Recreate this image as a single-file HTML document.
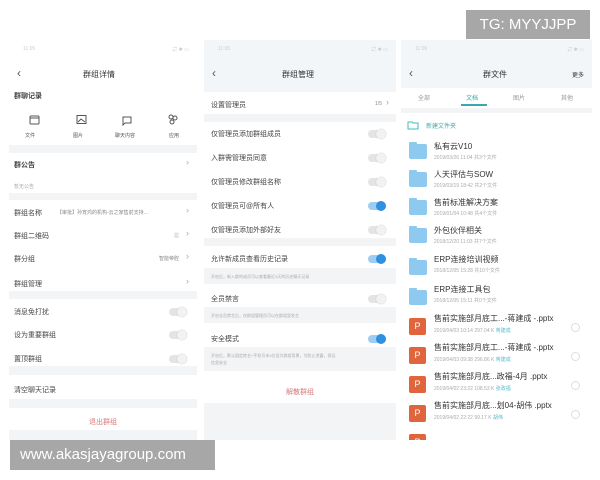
<!DOCTYPE html>
<html><head><meta charset="utf-8"><style>
*{margin:0;padding:0;box-sizing:border-box}
body{width:600px;height:480px;background:#fff;position:relative;overflow:hidden;font-family:"Liberation Sans","Noto Sans CJK SC",sans-serif;color:#333}
.a{position:absolute;white-space:nowrap}
.p{position:absolute;top:40px;height:400px;overflow:hidden}
.t{font-size:7px;color:#444}
.s{font-size:5px;color:#aaa}
.sep{position:absolute;left:0;right:0;background:#f3f4f6}
.tg{position:absolute;width:18px;height:8px;border-radius:4px;background:#e4e4e4}
.tg:after{content:"";position:absolute;right:0;top:-1px;width:10px;height:10px;border-radius:5px;background:#f2f2f2;box-shadow:0 0 1px #aaa}
.tg.on{background:#9fcdf2}
.tg.on:after{background:#2f8fe0;box-shadow:none}
.chev{font-size:9px;color:#aaa}
.fd{position:absolute;left:8px;width:18px;height:15px;background:#8ec9f0;border-radius:2px}
.fd:before{content:"";position:absolute;left:0;top:-2px;width:8px;height:3px;background:#8ec9f0;border-radius:1px 1px 0 0}
.pp{position:absolute;left:8px;width:17px;height:17px;background:#e0643c;border-radius:2px;color:#fff;font-size:9px;text-align:center;line-height:17px}
.nm{font-size:8px;color:#333}
.dt{font-size:5px;color:#aaa}
.ci{position:absolute;right:12px;width:9px;height:9px;border:1px solid #ddd;border-radius:50%}
</style></head><body>

<!-- panel 1 -->
<div class="p" style="left:9px;width:188px;background:#fff">
 <div class="a s" style="left:14px;top:6px;color:#ccc">11:05</div>
 <div class="a s" style="right:8px;top:6px;color:#ccc">⇄ ✱ ▭</div>
 <div class="a" style="left:8px;top:26px;font-size:12px;color:#555">‹</div>
 <div class="a" style="left:74px;top:29px;font-size:8px;color:#333">群组详情</div>
 <div class="a t" style="left:5px;top:51px;font-weight:bold">群聊记录</div>
 <svg class="a" style="left:20px;top:74px" width="150" height="12" viewBox="0 0 150 12" fill="none" stroke="#555" stroke-width="1"><rect x="1" y="2" width="9" height="8" rx="1"/><path d="M1 4h9"/><rect x="48" y="1.5" width="9" height="8"/><path d="M49 8l3-3 4 3"/><path d="M94 3h8v6h-6l-2 2z"/><circle cx="142" cy="3" r="2"/><circle cx="146" cy="4" r="2"/><circle cx="143" cy="8" r="2"/></svg>
 <div class="a s" style="left:16px;top:92px;color:#555">文件</div>
 <div class="a s" style="left:64px;top:92px;color:#555">图片</div>
 <div class="a s" style="left:106px;top:92px;color:#555">聊天内容</div>
 <div class="a s" style="left:160px;top:92px;color:#555">应用</div>
 <div class="sep" style="top:105px;height:8px"></div>
 <div class="a t" style="left:5px;top:120px;font-weight:bold">群公告</div><div class="a chev" style="right:8px;top:117px">›</div>
 <div class="a s" style="left:5px;top:143px">暂无公告</div>
 <div class="sep" style="top:153px;height:7px"></div>
 <div class="a t" style="left:5px;top:168px">群组名称</div>
 <div class="a s" style="left:48px;top:169px;color:#888">【审批】孙宵鸿的机构-云之家售前支持...</div><div class="a chev" style="right:8px;top:165px">›</div>
 <div class="a t" style="left:5px;top:191px">群组二维码</div><div class="a s" style="right:18px;top:192px">▦</div><div class="a chev" style="right:8px;top:188px">›</div>
 <div class="a t" style="left:5px;top:214px">群分组</div><div class="a s" style="right:18px;top:215px;color:#888">智能帝腔</div><div class="a chev" style="right:8px;top:211px">›</div>
 <div class="a t" style="left:5px;top:239px">群组管理</div><div class="a chev" style="right:8px;top:236px">›</div>
 <div class="sep" style="top:251px;height:8px"></div>
 <div class="a t" style="left:5px;top:267px">消息免打扰</div><div class="tg" style="right:10px;top:268px"></div>
 <div class="a t" style="left:5px;top:290px">设为重要群组</div><div class="tg" style="right:10px;top:291px"></div>
 <div class="a t" style="left:5px;top:314px">置顶群组</div><div class="tg" style="right:10px;top:315px"></div>
 <div class="sep" style="top:326px;height:9px"></div>
 <div class="a t" style="left:5px;top:345px">清空聊天记录</div>
 <div class="sep" style="top:359px;height:9px"></div>
 <div class="a" style="left:80px;top:377px;font-size:7px;color:#d87a7a">退出群组</div>
 <div class="sep" style="top:390px;height:10px"></div>
</div>

<!-- panel 2 -->
<div class="p" style="left:204px;width:192px;background:#fff">
 <div class="a" style="left:0;top:0;width:192px;height:52px;background:#f3f6f9"></div>
 <div class="a s" style="left:14px;top:6px;color:#ccc">11:05</div>
 <div class="a s" style="right:8px;top:6px;color:#ccc">⇄ ✱ ▭</div>
 <div class="a" style="left:8px;top:26px;font-size:12px;color:#555">‹</div>
 <div class="a" style="left:78px;top:29px;font-size:8px;color:#333">群组管理</div>
 <div class="a t" style="left:7px;top:60px">设置管理员</div><div class="a s" style="right:14px;top:61px;color:#888">1/5</div><div class="a chev" style="right:7px;top:57px">›</div>
 <div class="sep" style="top:74px;height:8px"></div>
 <div class="a t" style="left:7px;top:89px">仅管理员添加群组成员</div><div class="tg" style="right:10px;top:90px"></div>
 <div class="a t" style="left:7px;top:113px">入群需管理员同意</div><div class="tg" style="right:10px;top:114px"></div>
 <div class="a t" style="left:7px;top:137px">仅管理员修改群组名称</div><div class="tg" style="right:10px;top:138px"></div>
 <div class="a t" style="left:7px;top:161px">仅管理员可@所有人</div><div class="tg on" style="right:10px;top:162px"></div>
 <div class="a t" style="left:7px;top:185px">仅管理员添加外部好友</div><div class="tg" style="right:10px;top:186px"></div>
 <div class="sep" style="top:198px;height:8px"></div>
 <div class="a t" style="left:7px;top:214px">允许新成员查看历史记录</div><div class="tg on" style="right:10px;top:215px"></div>
 <div class="sep" style="top:228px;height:16px"></div><div class="a s" style="left:7px;top:234px;font-size:4px">开启后，新入群的成员可以查看最近3天的历史聊天记录</div>
 <div class="a t" style="left:7px;top:254px">全员禁言</div><div class="tg" style="right:10px;top:255px"></div>
 <div class="sep" style="top:267px;height:16px"></div><div class="a s" style="left:7px;top:273px;font-size:4px">开启全员禁言后，仅群组管理员可以在群组里发言</div>
 <div class="a t" style="left:7px;top:294px">安全模式</div><div class="tg on" style="right:10px;top:295px"></div>
 <div class="sep" style="top:307px;height:24px"></div><div class="a s" style="left:7px;top:312px;font-size:4px;line-height:7px">开启后，默认固定姓名+手机号末4位设为群组背景，为防止泄露，保证<br>信息安全</div>
 <div class="a" style="left:82px;top:347px;font-size:7px;color:#d87a7a">解散群组</div>
 <div class="sep" style="top:363px;height:40px"></div>
</div>

<!-- panel 3 -->
<div class="p" style="left:401px;width:191px;background:#fff">
 <div class="a" style="left:0;top:0;width:191px;height:48px;background:#f3f6f9"></div>
 <div class="a s" style="left:14px;top:6px;color:#ccc">11:06</div>
 <div class="a s" style="right:8px;top:6px;color:#ccc">⇄ ✱ ▭</div>
 <div class="a" style="left:8px;top:26px;font-size:12px;color:#555">‹</div>
 <div class="a" style="left:82px;top:29px;font-size:8px;color:#333">群文件</div>
 <div class="a" style="right:8px;top:30px;font-size:6px;color:#333">更多</div>
 <div class="a s" style="left:17px;top:53px;font-size:6px;color:#999">全部</div>
 <div class="a s" style="left:65px;top:53px;font-size:6px;color:#3aa">文档</div>
 <div class="a" style="left:60px;top:64px;width:26px;height:2px;background:#3aa8b0"></div>
 <div class="a s" style="left:112px;top:53px;font-size:6px;color:#999">图片</div>
 <div class="a s" style="left:160px;top:53px;font-size:6px;color:#999">其他</div>
 <div class="sep" style="top:68px;height:5px"></div>
 <svg class="a" style="left:6px;top:80px" width="12" height="10" fill="none" stroke="#4bb" stroke-width="1"><path d="M1 2h4l1 1h5v6H1z"/></svg>
 <div class="a" style="left:25px;top:81px;font-size:6px;color:#4aa">新建文件夹</div>
 <div class="fd" style="top:104px"></div><div class="a nm" style="left:33px;top:101px">私有云V10</div><div class="a dt" style="left:33px;top:114px">2019/03/26 11:04 共3个文件</div>
 <div class="fd" style="top:132px"></div><div class="a nm" style="left:33px;top:129px">人天评估与SOW</div><div class="a dt" style="left:33px;top:142px">2019/03/19 18:42 共2个文件</div>
 <div class="fd" style="top:160px"></div><div class="a nm" style="left:33px;top:157px">售前标准解决方案</div><div class="a dt" style="left:33px;top:170px">2019/01/04 10:48 共4个文件</div>
 <div class="fd" style="top:188px"></div><div class="a nm" style="left:33px;top:185px">外包伙伴相关</div><div class="a dt" style="left:33px;top:198px">2018/12/20 11:03 共7个文件</div>
 <div class="fd" style="top:220px"></div><div class="a nm" style="left:33px;top:214px">ERP连接培训视频</div><div class="a dt" style="left:33px;top:227px">2018/12/05 15:28 共10个文件</div>
 <div class="fd" style="top:250px"></div><div class="a nm" style="left:33px;top:244px">ERP连接工具包</div><div class="a dt" style="left:33px;top:257px">2018/12/05 15:11 共0个文件</div>
 <div class="pp" style="top:278px">P</div><div class="a nm" style="left:33px;top:273px">售前实施部月底工...-蒋建成 -.pptx</div><div class="a dt" style="left:33px;top:287px">2019/04/03 10:14 297.04 K <span style="color:#5bc">蒋建成</span></div><div class="ci" style="top:283px"></div>
 <div class="pp" style="top:307px">P</div><div class="a nm" style="left:33px;top:302px">售前实施部月底工...-蒋建成 -.pptx</div><div class="a dt" style="left:33px;top:316px">2019/04/03 09:38 296.86 K <span style="color:#5bc">蒋建成</span></div><div class="ci" style="top:312px"></div>
 <div class="pp" style="top:336px">P</div><div class="a nm" style="left:33px;top:331px">售前实施部月底...政福-4月 .pptx</div><div class="a dt" style="left:33px;top:345px">2019/04/02 23:22 108.53 K <span style="color:#5bc">张政福</span></div><div class="ci" style="top:341px"></div>
 <div class="pp" style="top:365px">P</div><div class="a nm" style="left:33px;top:360px">售前实施部月底...划04-胡伟 .pptx</div><div class="a dt" style="left:33px;top:374px">2019/04/02 22:22 99.17 K <span style="color:#5bc">胡伟</span></div><div class="ci" style="top:370px"></div>
 <div class="pp" style="top:394px">P</div>
</div>

<div class="a" style="left:466px;top:10px;width:124px;height:29px;background:#a7a7a7;color:#fff;font-size:15px;line-height:29px;text-align:center">TG: MYYJJPP</div>
<div class="a" style="left:10px;top:440px;width:205px;height:30px;background:#a7a7a7;color:#fff;font-size:15px;line-height:30px;padding-left:10px">www.akasjayagroup.com</div>
</body></html>
